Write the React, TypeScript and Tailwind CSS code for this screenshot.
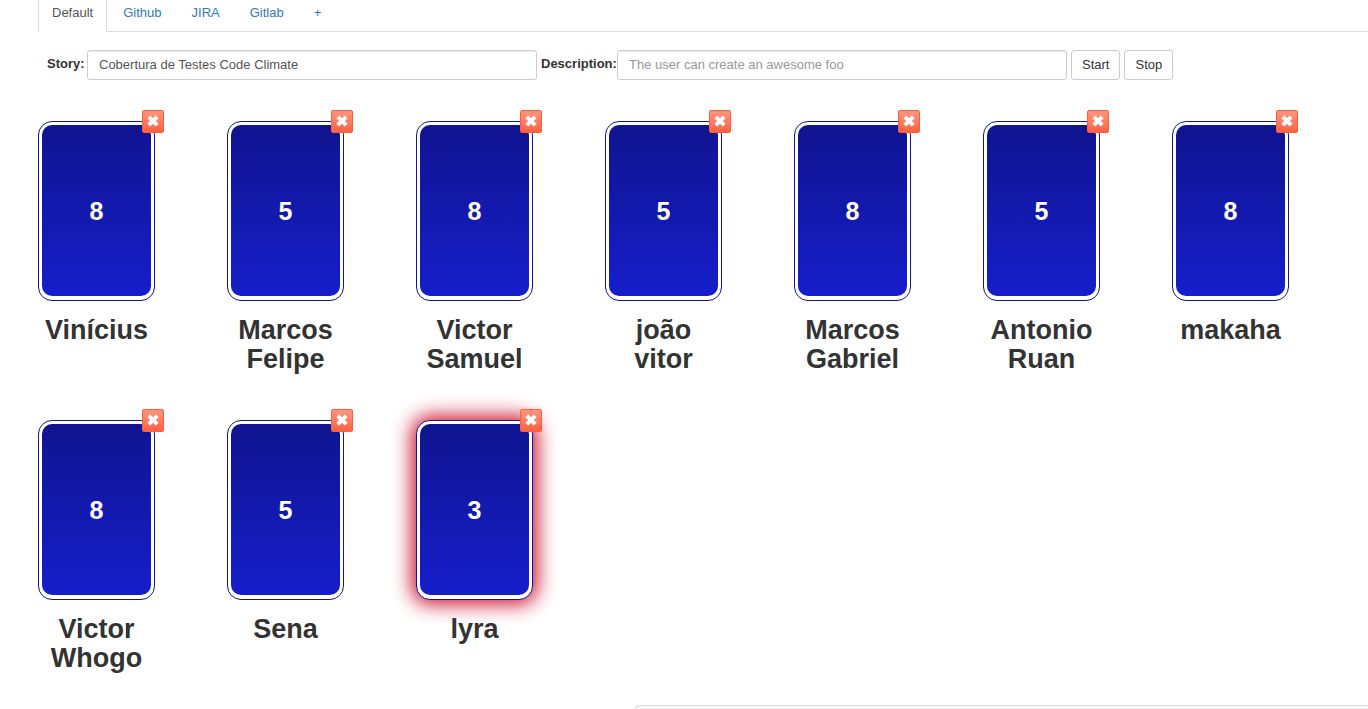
type Player = { name: string; points: number; active?: boolean };

const tabs = ["Github", "JIRA", "Gitlab", "+"];

const players: Player[] = [
  { name: "Vinícius", points: 8 },
  { name: "Marcos Felipe", points: 5 },
  { name: "Victor Samuel", points: 8 },
  { name: "joão vitor", points: 5 },
  { name: "Marcos Gabriel", points: 8 },
  { name: "Antonio Ruan", points: 5 },
  { name: "makaha", points: 8 },
  { name: "Victor Whogo", points: 8 },
  { name: "Sena", points: 5 },
  { name: "lyra", points: 3, active: true },
];

function Tabs() {
  return (
    <nav className="flex border-b border-[#ddd]">
      <a
        href="#default"
        aria-current="page"
        className="-mb-px mr-0.5 border-x border-[#ddd] bg-white px-[13px] pt-1 pb-2.5 text-[#555]"
      >
        Default
      </a>
      {tabs.map((tab) => (
        <a key={tab} href={`#${tab}`} className="mr-0.5 px-3.5 pt-1 pb-[9px] text-[#337ab7]">
          {tab}
        </a>
      ))}
    </nav>
  );
}

const inputClass =
  "h-[30px] w-[450px] rounded-[3px] border border-[#ccc] bg-white px-[11px] pb-0.5 text-[#555] shadow-[inset_0_1px_1px_rgba(0,0,0,0.075)] outline-none placeholder:text-[#999]";
const buttonClass = "h-[30px] rounded-[3px] border border-[#ccc] bg-white px-2.5 text-[#333]";

function StoryForm() {
  return (
    <form className="flex items-center gap-1 pt-[18px] pl-[9px]" onSubmit={(e) => e.preventDefault()}>
      <label htmlFor="story" className="w-9 pb-0.5 font-bold whitespace-nowrap">
        Story:
      </label>
      <input id="story" type="text" defaultValue="Cobertura de Testes Code Climate" className={inputClass} />
      <label htmlFor="description" className="w-[72px] pb-0.5 font-bold whitespace-nowrap">
        Description:
      </label>
      <input id="description" type="text" placeholder="The user can create an awesome foo" className={inputClass} />
      <button type="button" className={buttonClass}>
        Start
      </button>
      <button type="button" className={buttonClass}>
        Stop
      </button>
    </form>
  );
}

function PlayerCard({ name, points, active }: Player) {
  return (
    <li className="w-[117px]">
      <div
        className={`relative h-[180px] rounded-[14px] border border-[#10159a] bg-white p-[3px] pb-1 ${
          active ? "shadow-[0_0_20px_4px_#cc0c2c]" : ""
        }`}
      >
        <div className="flex h-full items-center justify-center rounded-[10px] bg-linear-to-b from-[#101490] to-[#151ecb] text-[25px] font-bold text-white">
          {points}
        </div>
        <button
          type="button"
          aria-label={`Remove ${name}`}
          className="absolute -top-3 -right-2.5 flex h-[23px] w-[22px] items-center justify-center rounded-[2px] border border-[#ff5c39] bg-linear-to-b from-[#ff9680] to-[#ff5f3f]"
        >
          <svg viewBox="0 0 12 12" className="mb-0.5 size-3 overflow-visible" fill="none" stroke="white" strokeWidth="4">
            <path d="M1.8 1.8 10.2 10.2M10.2 1.8 1.8 10.2" />
          </svg>
        </button>
      </div>
      <h2 className="mt-[15px] text-center text-[27px] leading-[29px] font-bold">{name}</h2>
    </li>
  );
}

export default function App() {
  return (
    <main className="overflow-x-hidden bg-white pl-[38px] font-['Liberation_Sans',Arial,sans-serif] text-[13px] leading-[18px] text-[#333]">
      <Tabs />
      <StoryForm />
      <ul className="mt-[41px] flex flex-wrap gap-x-[72px] gap-y-[46px]">
        {players.map((player) => (
          <PlayerCard key={player.name} {...player} />
        ))}
      </ul>
      <div className="mt-8 ml-[597px] h-1 rounded-tl border-t border-l border-[#ddd] bg-[#f5f5f5]" />
    </main>
  );
}
